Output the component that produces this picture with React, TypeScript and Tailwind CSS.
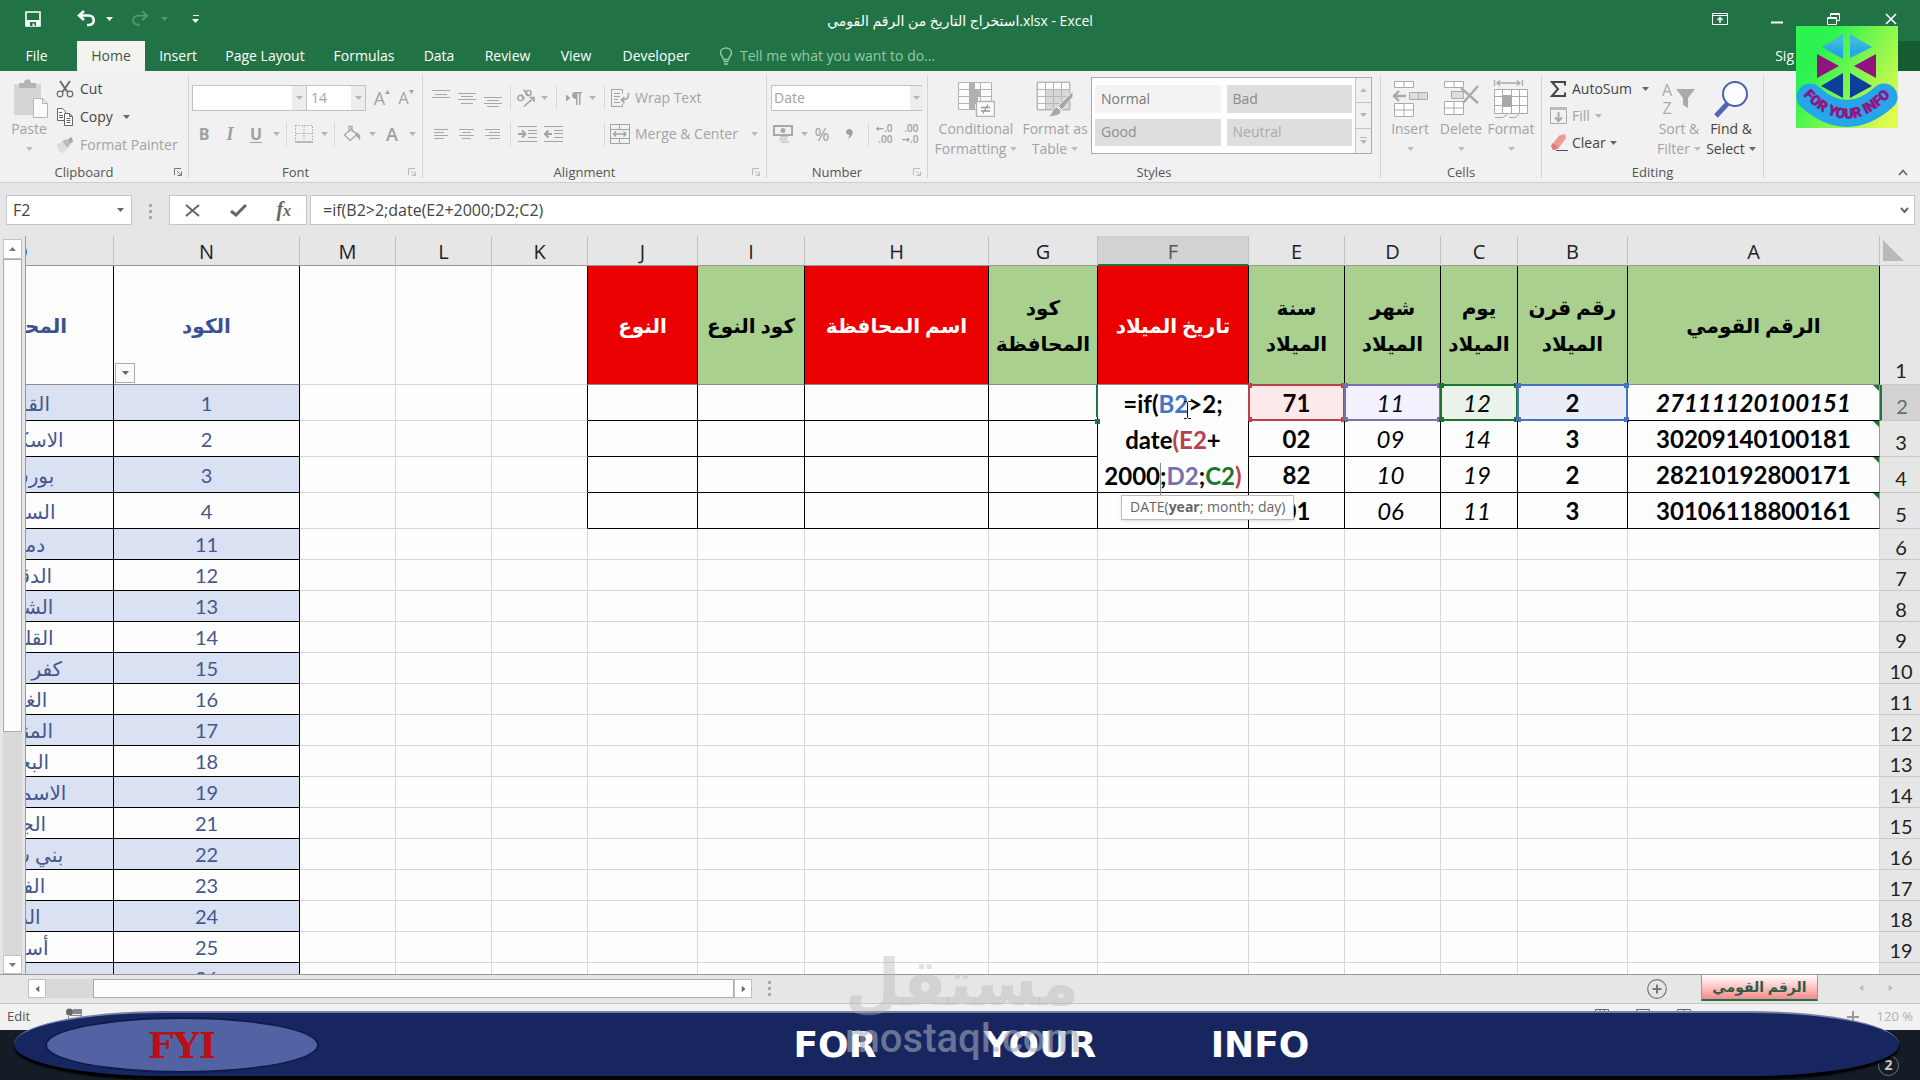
import type { ReactNode } from 'react'

const UI = "font-['Open_Sans','DejaVu_Sans',sans-serif]"
const CELL = "font-['Lato','DejaVu_Sans',sans-serif]"

const governorates: [number, string][] = [
  [1, 'القاهرة'],
  [2, 'الاسكندرية'],
  [3, 'بورسعيد'],
  [4, 'السويس'],
  [11, 'دمياط'],
  [12, 'الدقهلية'],
  [13, 'الشرقية'],
  [14, 'القليوبية'],
  [15, 'كفر الشيخ'],
  [16, 'الغربية'],
  [17, 'المنوفية'],
  [18, 'البحيرة'],
  [19, 'الاسماعيلية'],
  [21, 'الجيزة'],
  [22, 'بني سويف'],
  [23, 'الفيوم'],
  [24, 'المنيا'],
  [25, 'أسيوط'],
  [26, 'سوهاج'],
]

const people = [
  { year: '71', month: '11', day: '12', century: '2', id: '27111120100151' },
  { year: '02', month: '09', day: '14', century: '3', id: '30209140100181' },
  { year: '82', month: '10', day: '19', century: '2', id: '28210192800171' },
  { year: '01', month: '06', day: '11', century: '3', id: '30106118800161' },
]

const columns = ['O', 'N', 'M', 'L', 'K', 'J', 'I', 'H', 'G', 'F', 'E', 'D', 'C', 'B', 'A']

const tabs = [
  { name: 'File', width: 'w-[77px] pr-1' },
  { name: 'Home', width: 'w-[68px]' },
  { name: 'Insert', width: 'w-[66px]' },
  { name: 'Page Layout', width: 'w-[108px]' },
  { name: 'Formulas', width: 'w-[90px]' },
  { name: 'Data', width: 'w-[60px]' },
  { name: 'Review', width: 'w-[77px]' },
  { name: 'View', width: 'w-[60px]' },
  { name: 'Developer', width: 'w-[100px]' },
]

/* ---------- small drawing helpers ---------- */

function Caret({ className = 'text-[#b5b5b5]' }: { className?: string }) {
  return (
    <svg width="7" height="4" viewBox="0 0 7 4" className={className}>
      <path d="M0 0h7L3.5 4z" fill="currentColor" />
    </svg>
  )
}

function Slot({ w, children, label }: { w: string; children: ReactNode; label?: string }) {
  return (
    <button aria-label={label} className={`flex h-full shrink-0 items-center justify-center ${w}`}>
      {children}
    </button>
  )
}

function Sep({ w = 'w-2' }: { w?: string }) {
  return (
    <span className={`flex h-6 shrink-0 justify-center ${w}`}>
      <span className="w-px bg-[#d8d8d8]" />
    </span>
  )
}

function Lines({ rows }: { rows: [number, number, number][] }) {
  return (
    <svg width="20" height="20" viewBox="0 0 20 20" stroke="#a8a8a8" strokeWidth="1">
      {rows.map(([x1, x2, y]) => (
        <path key={y} d={`M${x1} ${y}.5H${x2}`} />
      ))}
    </svg>
  )
}

function Launcher({ color }: { color: string }) {
  return (
    <svg width="8" height="8" viewBox="0 0 8 8" className={`absolute right-[6px] bottom-[2px] ${color}`}>
      <path d="M.5 7V.5H7M3 3l4 4M7.5 3.5v4h-4" fill="none" stroke="currentColor" />
    </svg>
  )
}

function Group(props: { title: string; width: string; launcher?: string; children: ReactNode }) {
  return (
    <section className={`relative my-1 flex shrink-0 flex-col border-r border-[#d4d4d4] ${props.width}`}>
      <div className="flex h-[87px]">{props.children}</div>
      <p className={`h-4 text-center text-[13px] leading-5 text-[#555] ${props.launcher ? 'pr-5' : ''}`}>{props.title}</p>
      {props.launcher && <Launcher color={props.launcher} />}
    </section>
  )
}

function BigButton(props: { icon: ReactNode; lines: string[]; width: string; active?: boolean }) {
  const [first, second] = props.lines
  return (
    <button
      className={`flex shrink-0 flex-col items-center pt-1 text-sm leading-5 whitespace-nowrap ${props.width} ${
        props.active ? 'text-[#444]' : 'text-[#a3a3a3]'
      }`}
    >
      <span className="flex h-10 items-center justify-center">{props.icon}</span>
      <span>{first}</span>
      <span className="flex h-5 items-center gap-1">
        {second}
        <Caret className={props.active ? 'text-[#666]' : 'text-[#bbb]'} />
      </span>
    </button>
  )
}

/* ---------- title bar ---------- */

function TitleBar() {
  return (
    <header className="bg-[#217346] text-white">
      <div className="grid h-[41px] grid-cols-[1fr_auto_1fr] items-center">
        <div className="flex items-center pb-1 pl-[25px]">
          <button aria-label="Save">
            <svg width="16" height="16" viewBox="0 0 16 16">
              <path d="M1 1h14v14H1z" fill="none" stroke="#fff" strokeWidth="1.6" />
              <path d="M1 9h14v6H1z" fill="#fff" />
              <path d="M5 11h6v4H9.500v-2.500h-2V15H5z" fill="#217346" />
            </svg>
          </button>
          <button aria-label="Undo" className="ml-9 flex items-center gap-[9px]">
            <svg width="20" height="17" viewBox="0 0 20 17" fill="none" stroke="#fff" strokeWidth="2.600">
              <path d="M7 1 2 5.500l5 4.500M3 5.500h8.500c7 0 7 9.500 0 9.500H10" />
            </svg>
            <Caret className="text-white" />
          </button>
          <button aria-label="Redo" className="ml-[17px] flex items-center gap-3 opacity-25">
            <svg width="19" height="17" viewBox="0 0 20 17" fill="none" stroke="#fff" strokeWidth="2">
              <path d="m13 1 5 4.500-5 4.500M17 5.500H8.500c-7 0-7 9.500 0 9.500H10" />
            </svg>
            <Caret className="text-white" />
          </button>
          <button aria-label="Customize Quick Access Toolbar" className="ml-6 flex flex-col items-center gap-[3px]">
            <span className="h-px w-[6px] bg-white" />
            <Caret className="text-white" />
          </button>
        </div>
        <h1 dir="ltr" className="text-sm">
          <bdi>استخراج التاريخ من الرقم القومي</bdi>.xlsx - Excel
        </h1>
        <div className="flex items-center justify-end pr-[23px] pb-1">
          <button aria-label="Ribbon Display Options" className="mr-[43px]">
            <svg width="16" height="12" viewBox="0 0 16 12" fill="none" stroke="#fff">
              <path d="M.5.5h15v11H.5zM0 2.500h16" />
              <path d="M8 10V4.500M5.500 7 8 4.500 10.500 7" strokeWidth="1.500" />
            </svg>
          </button>
          <button aria-label="Minimize" className="mr-[44px]">
            <svg width="12" height="12" viewBox="0 0 12 12">
              <path d="M0 8.500h12v2H0z" fill="#fff" />
            </svg>
          </button>
          <button aria-label="Restore" className="mr-[45px]">
            <svg width="13" height="12" viewBox="0 0 13 12" fill="none" stroke="#fff">
              <path d="M.5 4.500h9v7h-9zM.5 5.500h9M3.500 4V.5h9v7h-3M3.500 1.500h9" />
            </svg>
          </button>
          <button aria-label="Close">
            <svg width="12" height="12" viewBox="0 0 12 12" stroke="#fff" strokeWidth="1.700">
              <path d="m1 1 10 10M11 1 1 11" />
            </svg>
          </button>
        </div>
      </div>

      <nav className="flex h-[30px] items-stretch text-sm">
        {tabs.map((tab) => (
          <button
            key={tab.name}
            className={`shrink-0 ${tab.width} ${tab.name === 'Home' ? 'bg-[#f3f3f1] text-[#3d5a49]' : ''}`}
          >
            {tab.name}
          </button>
        ))}
        <button className="ml-[13px] flex items-center gap-[7px] text-[#93c9a8]">
          <svg width="14" height="18" viewBox="0 0 14 18" fill="none" stroke="currentColor" strokeWidth="1.500">
            <path d="M4.500 12.500C4.500 10 1.500 9 1.500 5.800 1.500 3 4 1 7 1s5.500 2 5.500 4.800c0 3.200-3 4.200-3 6.700zM4.500 14.500h5M5 17h4" />
          </svg>
          Tell me what you want to do...
        </button>
        <button className="ml-auto pr-[102px]">Sig</button>
        <span className="w-6 bg-[#155c33]" />
      </nav>
    </header>
  )
}

/* ---------- ribbon ---------- */

function Clipboard() {
  return (
    <Group title="Clipboard" width="w-[189px]" launcher="text-[#777]">
      <BigButton
        width="ml-[2px] w-[54px]"
        lines={['Paste', '']}
        icon={
          <svg width="36" height="40" viewBox="0 0 36 40" className="ml-1">
            <path d="M1 5h27v31H1z" fill="#d6d6d6" />
            <path d="M6 4h5c0-5 7-5 7 0h5v5H6z" fill="#b4b4b4" />
            <path d="M20.500 19.500h9l5 5v14h-14zM29.500 19.500v5h5" fill="#fbfbfb" stroke="#b4b4b4" />
          </svg>
        }
      />
      <div className="flex flex-col text-sm text-[#444]">
        <button className="flex h-7 items-center gap-[6px]">
          <svg width="18" height="18" viewBox="0 0 18 18" fill="none" stroke="#6b6b6b">
            <path d="m4 1 7.500 11M14 1 6.500 12" strokeWidth="2" />
            <circle cx="4" cy="14" r="2.800" strokeWidth="1.200" />
            <circle cx="14" cy="14" r="2.800" strokeWidth="1.200" />
          </svg>
          Cut
        </button>
        <button className="flex h-7 items-center gap-[6px]">
          <svg width="18" height="18" viewBox="0 0 18 18" fill="#fff" stroke="#666">
            <path d="M1.500.5h5l3 3v9h-8zM3 4.500h3M3 7.500h4M3 9.500h4" />
            <path d="M8.500 5.500h5l3 3v9h-8zM13.500 5.500v3h3M10.500 10.500h4M10.500 12.500h4M10.500 14.500h4" />
          </svg>
          Copy
          <Caret className="ml-1 text-[#666]" />
        </button>
        <button className="flex h-7 items-center gap-[6px] text-[#a3a3a3]">
          <svg width="18" height="16" viewBox="0 0 18 16">
            <path d="m12 2 4-2 1 5-4 2z" fill="#a8a8a8" />
            <path d="m6 4 5-2 3 6-3 3z" fill="#bbb" />
            <path d="m1 7 5-2 5 7-4 4c-3 0-6-4-6-9z" fill="#dcdcdc" />
          </svg>
          Format Painter
        </button>
      </div>
    </Group>
  )
}

function FontGroup() {
  return (
    <Group title="Font" width="w-[234px]" launcher="text-[#bbb]">
      <div className="pt-[10px]">
        <div className="flex h-[26px] items-center pl-[3px]">
          <label className="relative flex">
            <select aria-label="Font name" className="h-[26px] w-[115px] appearance-none border border-[#c3c3c3] bg-white">
              <option> </option>
            </select>
            <span className="pointer-events-none absolute top-px right-px bottom-px flex w-[14px] items-center justify-center bg-[#ededed]">
              <Caret />
            </span>
          </label>
          <label className="relative -ml-px flex">
            <select aria-label="Font size" className="h-[26px] w-[60px] appearance-none border border-[#c3c3c3] bg-white pl-1 text-sm text-[#a3a3a3]">
              <option>14</option>
            </select>
            <span className="pointer-events-none absolute top-px right-px bottom-px flex w-[14px] items-center justify-center bg-[#ededed]">
              <Caret />
            </span>
          </label>
          <Slot w="ml-1 w-6">
            <span className="flex text-lg leading-6 text-[#a3a3a3]">
              A<svg width="5" height="4" viewBox="0 0 5 4" className="mt-1"><path d="M2.500 0 5 4H0z" fill="#a3a3a3" /></svg>
            </span>
          </Slot>
          <Slot w="w-6">
            <span className="flex text-base leading-6 text-[#a3a3a3]">
              A<svg width="5" height="4" viewBox="0 0 5 4" className="mt-1"><path d="M0 0h5L2.500 4z" fill="#a3a3a3" /></svg>
            </span>
          </Slot>
        </div>
        <div className="mt-[11px] flex h-6 items-center pl-px text-base text-[#a0a0a0]">
          <Slot w="w-7"><b>B</b></Slot>
          <Slot w="w-6"><b className="font-['Liberation_Serif',serif] text-lg italic">I</b></Slot>
          <Slot w="w-7"><b className="underline underline-offset-2">U</b></Slot>
          <Slot w="w-3"><Caret /></Slot>
          <Sep />
          <Slot w="w-7" label="Borders">
            <svg width="18" height="18" viewBox="0 0 18 18" fill="none" stroke="#a8a8a8">
              <path d="M.5.5h17v16M.5.5v16M9 1v16M1 8.500h16" strokeDasharray="1.500 1.500" />
              <path d="M0 17h18" strokeWidth="1.500" />
            </svg>
          </Slot>
          <Slot w="w-3"><Caret /></Slot>
          <Sep />
          <Slot w="w-7" label="Fill Color">
            <svg width="18" height="18" viewBox="0 0 18 18" fill="none" stroke="#a8a8a8" strokeWidth="1.300">
              <path d="m8 4 6 5.500-7 6L1.500 10zM6 7V1.500h3V7" />
              <path d="M14 8c3 2 3 4 2.500 6-1-1-1.500-3-3.500-4z" fill="#a8a8a8" />
            </svg>
          </Slot>
          <Slot w="w-3"><Caret /></Slot>
          <Slot w="w-7"><span className="text-lg leading-6 font-semibold">A</span></Slot>
          <Slot w="w-3"><Caret /></Slot>
        </div>
      </div>
    </Group>
  )
}

function Alignment() {
  return (
    <Group title="Alignment" width="w-[344px]" launcher="text-[#bbb]">
      <div className="pt-[10px] pl-[5px] text-sm text-[#a3a3a3]">
        <div className="flex h-[26px] items-center">
          <Slot w="w-[26px]"><Lines rows={[[1, 19, 2], [4, 16, 6], [1, 19, 9]]} /></Slot>
          <Slot w="w-[26px]"><Lines rows={[[1, 19, 5], [4, 16, 8], [1, 19, 11], [4, 16, 15]]} /></Slot>
          <Slot w="w-[26px]"><Lines rows={[[1, 19, 9], [4, 16, 12], [1, 19, 15], [4, 16, 18]]} /></Slot>
          <Sep />
          <Slot w="w-6" label="Orientation">
            <svg width="20" height="20" viewBox="0 0 20 20" fill="none" stroke="#a3a3a3" strokeWidth="1.400">
              <circle cx="4.500" cy="10" r="2.600" />
              <path d="m5 6.500 3.500 4.500M7.500 1.500l5.500 6.500" />
              <circle cx="12.500" cy="5" r="2.600" />
              <path d="M8 18.500 18 9.500M13.500 9.500H18V14" strokeWidth="1.600" />
            </svg>
          </Slot>
          <Slot w="w-3"><Caret /></Slot>
          <Sep w="w-3" />
          <Slot w="w-6" label="Text direction">
            <svg width="16" height="13" viewBox="0 0 16 13" fill="#a3a3a3">
              <path d="M0 2.500 4.500 6 0 9.500zM9 0h7v1.500h-1.500V13H13V1.500h-1.500V13H10V7C5 7 5 0 9 0z" />
            </svg>
          </Slot>
          <Slot w="w-3"><Caret /></Slot>
          <Sep w="w-3" />
          <button className="flex items-center gap-[5px]">
            <svg width="20" height="18" viewBox="0 0 20 18" fill="none" stroke="#a3a3a3">
              <path d="M1.500.5h11v4M1.500.5v17h11v-3M4 4.500h6M4 7.500h6M4 10.500h4M4 13.500h6" />
              <path d="M18 4c1.500 4-1 7-6 7M14.500 8 11.500 11l3 3" strokeWidth="1.600" />
            </svg>
            Wrap Text
          </button>
        </div>
        <div className="mt-[11px] flex h-6 items-center">
          <Slot w="w-[26px]"><Lines rows={[[3, 17, 5], [3, 13, 8], [3, 17, 11], [3, 13, 14]]} /></Slot>
          <Slot w="w-[26px]"><Lines rows={[[2, 17, 5], [5, 14, 8], [2, 17, 11], [5, 14, 14]]} /></Slot>
          <Slot w="w-[26px]"><Lines rows={[[2, 17, 5], [6, 17, 8], [2, 17, 11], [6, 17, 14]]} /></Slot>
          <Sep />
          <Slot w="w-[26px]" label="Decrease Indent">
            <svg width="19" height="16" viewBox="0 0 19 16" fill="none" stroke="#a3a3a3">
              <path d="M0 .5h19M10 4.500h9M10 7.500h9M10 11.500h9M0 15.500h19" />
              <path d="M0 8h7M4 4.500 7.500 8 4 11.500" strokeWidth="2" />
            </svg>
          </Slot>
          <Slot w="w-[26px]" label="Increase Indent">
            <svg width="19" height="16" viewBox="0 0 19 16" fill="none" stroke="#a3a3a3">
              <path d="M0 .5h19M10 4.500h9M10 7.500h9M10 11.500h9M0 15.500h19" />
              <path d="M1 8h7M4.500 4.500 1 8l3.500 3.500" strokeWidth="2" />
            </svg>
          </Slot>
          <span className="w-8" />
          <Sep w="w-3" />
          <button className="flex items-center gap-[5px]">
            <svg width="20" height="20" viewBox="0 0 20 20" fill="none" stroke="#a3a3a3">
              <path d="M.5.5h19v19H.5zM.5 5.500h19M.5 14.500h19M9.500.5v5M9.500 14.500v5" />
              <path d="M3.500 10h12M6 7.500 3.500 10 6 12.500M13.500 7.500 16 10l-2.500 2.500" strokeWidth="1.300" />
            </svg>
            Merge &amp; Center
            <Caret className="ml-2 text-[#bbb]" />
          </button>
        </div>
      </div>
    </Group>
  )
}

function NumberGroup() {
  return (
    <Group title="Number" width="w-[161px]" launcher="text-[#bbb]">
      <div className="pt-[10px] text-[#a0a0a0]">
        <label className="relative ml-1 flex">
          <select aria-label="Number format" className="h-[26px] w-[151px] appearance-none border border-[#c3c3c3] bg-white pl-[2px] text-sm">
            <option>Date</option>
          </select>
          <span className="pointer-events-none absolute top-px right-px bottom-px flex w-[13px] items-center justify-center bg-[#ededed]">
            <Caret />
          </span>
        </label>
        <div className="mt-[11px] flex h-6 items-center pl-px">
          <Slot w="w-[30px]" label="Accounting format">
            <svg width="20" height="19" viewBox="0 0 20 19">
              <path d="M1 1h18v9H1z" fill="none" stroke="#a8a8a8" strokeWidth="2" />
              <circle cx="10" cy="5.500" r="2.500" fill="#a8a8a8" />
              <path d="M7 12h8M6 14.500h8M8 17h8" stroke="#c4c4c4" strokeWidth="1.500" />
            </svg>
          </Slot>
          <Slot w="w-3"><Caret /></Slot>
          <Slot w="w-6"><span className="text-lg leading-6">%</span></Slot>
          <Slot w="w-[30px]" label="Comma style">
            <svg width="7" height="10" viewBox="0 0 7 10" fill="#a0a0a0">
              <path d="M3 0c3 0 4 2 3.500 4.500S4 9 1 10c1.500-1.500 2.500-2.500 2.500-4C-1 6-1 0 3 0z" />
            </svg>
          </Slot>
          <Sep />
          <Slot w="w-6">
            <span className="flex flex-col items-end text-[10px] leading-[11px] font-semibold">
              <span>←.0</span>
              <span>.00</span>
            </span>
          </Slot>
          <Slot w="w-7">
            <span className="flex flex-col items-end text-[10px] leading-[11px] font-semibold">
              <span>.00</span>
              <span>→.0</span>
            </span>
          </Slot>
        </div>
      </div>
    </Group>
  )
}

function Styles() {
  return (
    <Group title="Styles" width="w-[453px]">
      <BigButton
        width="ml-[2px] w-[92px]"
        lines={['Conditional', 'Formatting']}
        icon={
          <svg width="38" height="36" viewBox="0 0 38 36" fill="none" stroke="#b4b4b4">
            <path d="M1.500 1.500h33v27h-33zM1.500 8.500h33M1.500 15.500h33M1.500 22.500h33M12.500 1.500v27M23.500 1.500v27" fill="#fbfbfb" />
            <path d="M12 2h6v6h-6zM12 9h11v6H12zM12 16h9v6h-9zM12 23h6v6h-6z" fill="#b0b0b0" stroke="none" />
            <path d="M19.500 20.500h18v15h-18z" fill="#fbfbfb" strokeWidth="1.500" />
            <path d="M24 26.500h9M24 30h9M31 23.500l-5 9" stroke="#999" strokeWidth="1.300" />
          </svg>
        }
      />
      <BigButton
        width="w-[66px]"
        lines={['Format as', 'Table']}
        icon={
          <svg width="38" height="36" viewBox="0 0 38 36" fill="none" stroke="#b8b8b8">
            <path d="M1 1h33v28H1z" fill="#fbfbfb" />
            <path d="M9 8h25v21H9z" fill="#d8d8d8" stroke="none" />
            <path d="M1.500 1.500h32v27h-32zM1.500 8.500h32M1.500 15.500h32M1.500 22.500h32M9.500 1.500v27M17.500 1.500v27M25.500 1.500v27" />
            <path d="M37 10v6L26 29l-4-4zM21 26l4 4c0 4-4 5-13 6 4-2 4-9 9-10z" fill="#a8a8a8" stroke="#f3f3f3" />
          </svg>
        }
      />
      <div className="mt-[2px] ml-[3px] flex h-[77px] w-[281px] border border-[#ababab] bg-white text-sm">
        <div className="grid flex-1 grid-cols-2 gap-x-[6px] gap-y-[6px] px-[3px] py-[7px] text-left text-[#a3a3a3]">
          <button className="bg-[#f5f2f3] pl-[6px] text-left text-[#777]">Normal</button>
          <button className="bg-[#dedede] pl-[6px] text-left text-[#8a8a8a]">Bad</button>
          <button className="bg-[#dedede] pl-[6px] text-left text-[#8f8f8f]">Good</button>
          <button className="bg-[#dedede] pl-[6px] text-left text-[#aaa]">Neutral</button>
        </div>
        <div className="flex w-4 flex-col divide-y divide-[#c4c4c4] border-l border-[#c4c4c4] bg-[#f0f0f0]">
          <button aria-label="Previous styles" className="flex flex-1 items-center justify-center"><Caret className="rotate-180 text-[#bbb]" /></button>
          <button aria-label="Next styles" className="flex flex-1 items-center justify-center"><Caret /></button>
          <button aria-label="More styles" className="flex flex-1 flex-col items-center justify-center gap-[2px]">
            <span className="h-px w-[7px] bg-[#bbb]" />
            <Caret />
          </button>
        </div>
      </div>
    </Group>
  )
}

function Cells() {
  return (
    <Group title="Cells" width="w-[161px]">
      <BigButton
        width="ml-[3px] w-[52px]"
        lines={['Insert', '']}
        icon={
          <svg width="36" height="36" viewBox="0 0 36 36" fill="#fff" stroke="#aaa">
            <path d="M2.500.5h19v6h-19zM12 .5v6M2.500 22.500h19v13h-19zM12 22.500v13M2.500 29h19" />
            <path d="M17.500 11.500h18v7h-18zM26.500 11.500v7" fill="#ddd" />
            <path d="M14 15H2M7 10l-5 5 5 5" fill="none" strokeWidth="2.400" />
          </svg>
        }
      />
      <BigButton
        width="w-[50px]"
        lines={['Delete', '']}
        icon={
          <svg width="36" height="36" viewBox="0 0 36 36" fill="#fff" stroke="#aaa">
            <path d="M1.500.5h19v6h-19zM11 .5v6M1.500 20.500h19v13h-19zM11 20.500v13M1.500 27h19" />
            <path d="M8.500 10.500h12v7h-12z" fill="#ddd" />
            <path d="m18 7 17 15M35 5 20 22" fill="none" strokeWidth="2.400" />
          </svg>
        }
      />
      <BigButton
        width="w-[50px]"
        lines={['Format', '']}
        icon={
          <svg width="36" height="38" viewBox="0 0 36 38" fill="#fff" stroke="#aaa">
            <path d="M1.500 0v6M29.500 0v6M4 3h23M7 .5 4 3l3 2.500M24 .5 27 3l-3 2.500" fill="none" strokeWidth="1.300" />
            <path d="M1.500 9.500h33v24h-33zM1.500 16.500h33M1.500 25.500h33M9.500 9.500v24M18.500 9.500v24M26.500 9.500v24" />
            <path d="M10 15h9v12h-9z" fill="#a8a8a8" stroke="none" />
            <path d="M2 37.500h8l4-3M16 37.500h6l4-3" fill="none" />
          </svg>
        }
      />
    </Group>
  )
}

function Editing() {
  return (
    <Group title="Editing" width="w-[222px]">
      <div className="flex w-[111px] flex-col pl-2 text-sm text-[#444]">
        <button className="flex h-[27px] items-center gap-[6px]">
          <svg width="16" height="16" viewBox="0 0 16 16">
            <path d="M15 4.500V1H2l6 7-6 7h13v-3.500" fill="none" stroke="#444" strokeWidth="2" />
          </svg>
          AutoSum
          <Caret className="ml-1 text-[#666]" />
        </button>
        <button className="flex h-[27px] items-center gap-[5px] text-[#a3a3a3]">
          <svg width="17" height="17" viewBox="0 0 17 17" fill="none" stroke="#aaa">
            <path d="M.5.5h16v16H.5z" />
            <path d="M0 0h17v3H0z" fill="#bbb" stroke="none" />
            <path d="M8.500 5v9M5 10.500 8.500 14l3.500-3.500" strokeWidth="2" />
          </svg>
          Fill
          <Caret />
        </button>
        <button className="flex h-[27px] items-center gap-1">
          <svg width="18" height="17" viewBox="0 0 18 17">
            <path d="M9 1.500 15 0l1 4-8 11-5 1-2-4z" fill="#ee9a98" />
            <path d="m1 12 2-3 5 4-1 2-4 1z" fill="#d98080" />
            <path d="M6 16.500h12" stroke="#555" />
          </svg>
          Clear
          <Caret className="text-[#666]" />
        </button>
      </div>
      <BigButton
        width="w-[52px]"
        lines={['Sort &', 'Filter']}
        icon={
          <span className="flex items-center text-base leading-[18px] text-[#aaa]">
            <span className="flex flex-col items-center">
              <span>A</span>
              <span>Z</span>
            </span>
            <svg width="20" height="20" viewBox="0 0 20 20" className="ml-1">
              <path d="M0 0h19l-7 9v10l-5-3V9z" fill="#aaa" />
            </svg>
          </span>
        }
      />
      <BigButton
        width="w-[52px]"
        active
        lines={['Find &', 'Select']}
        icon={
          <svg width="36" height="38" viewBox="0 0 36 38" fill="none">
            <path d="m15 23-12 13" stroke="#4f68b0" strokeWidth="5" />
            <circle cx="22" cy="14" r="12" fill="#fdfdff" stroke="#4a63ad" strokeWidth="2" />
          </svg>
        }
      />
    </Group>
  )
}

function Ribbon() {
  return (
    <div className="flex h-28 border-b border-[#cfcfcf] bg-[#f1f1f1]">
      <Clipboard />
      <FontGroup />
      <Alignment />
      <NumberGroup />
      <Styles />
      <Cells />
      <Editing />
      <button aria-label="Collapse the Ribbon" className="mt-auto mr-3 mb-[6px] ml-auto">
        <svg width="10" height="7" viewBox="0 0 10 7">
          <path d="m1 6 4-4.500L9 6" fill="none" stroke="#666" strokeWidth="1.700" />
        </svg>
      </button>
    </div>
  )
}

function FormulaBar() {
  return (
    <div className="flex h-[53px] items-start bg-[#e6e6e6] pt-3 pr-[5px] pl-[6px] text-[#444]">
      <label className="relative flex">
        <input aria-label="Name Box" defaultValue="F2" className="h-[30px] w-[126px] border border-[#c6c6c6] bg-white pl-[6px] text-base" />
        <Caret className="absolute top-[13px] right-2 text-[#666]" />
      </label>
      <Grip className="mx-[17px] mt-[9px]" />
      <div className="flex h-[30px] w-[138px] items-center justify-around border border-[#c6c6c6] bg-white">
        <button aria-label="Cancel">
          <svg width="15" height="13" viewBox="0 0 15 13" stroke="#666" strokeWidth="2">
            <path d="m1 1 13 11M14 1 1 12" />
          </svg>
        </button>
        <button aria-label="Enter">
          <svg width="17" height="13" viewBox="0 0 17 13" fill="none" stroke="#666" strokeWidth="3">
            <path d="m1 7 5 4L16 1" />
          </svg>
        </button>
        <button aria-label="Insert Function" className="font-['Liberation_Serif',serif] text-xl leading-6 font-bold text-[#666] italic">
          f<span className="text-base">x</span>
        </button>
      </div>
      <label className="relative ml-[3px] flex flex-1">
        <input
          aria-label="Formula"
          defaultValue="=if(B2>2;date(E2+2000;D2;C2)"
          className="h-[30px] w-full border border-[#c6c6c6] bg-white pl-3 text-base"
        />
        <svg width="9" height="6" viewBox="0 0 9 6" className="absolute top-3 right-[6px]">
          <path d="m1 1 3.500 4L8 1" fill="none" stroke="#666" strokeWidth="2" />
        </svg>
      </label>
    </div>
  )
}

function Grip({ className }: { className: string }) {
  return (
    <span className={`flex flex-col gap-[3px] ${className}`}>
      <span className="size-[3px] bg-[#ababab]" />
      <span className="size-[3px] bg-[#ababab]" />
      <span className="size-[3px] bg-[#ababab]" />
    </span>
  )
}

/* ---------- sheet ---------- */

function RangeBox({ line, fill, handle }: { line: string; fill: string; handle: string }) {
  return (
    <span className={`pointer-events-none absolute -inset-px border-2 ${line} ${fill}`}>
      <span className={`absolute -top-[3px] -left-[3px] size-[5px] ${handle}`} />
      <span className={`absolute -top-[3px] -right-[3px] size-[5px] ${handle}`} />
      <span className={`absolute -bottom-[3px] -left-[3px] size-[5px] ${handle}`} />
      <span className={`absolute -right-[3px] -bottom-[3px] size-[5px] ${handle}`} />
    </span>
  )
}

function CellEditor() {
  return (
    <div className="absolute top-0 left-0 z-20 w-full bg-[#fdfdfd] pt-px text-center text-2xl leading-9 font-bold whitespace-nowrap text-black">
      <span className="absolute top-0 -left-[2px] h-8 w-[2px] bg-[#217346]" />
      <span className="absolute top-[34px] -left-[3px] size-[5px] bg-[#217346]" />
      <p>=if(<span className="text-[#4472c4]">B2</span>&gt;2;</p>
      <p>date<span className="text-[#b8414b]">(E2</span>+</p>
      <p className="h-[34px]">
        2000<span className="-mr-px inline-block h-8 w-px bg-[#888] align-middle" />;
        <span className="text-[#7a6fae]">D2</span>;<span className="text-[#19762b]">C2</span>
        <span className="text-[#b8414b]">)</span>
      </p>
      <svg width="9" height="18" viewBox="0 0 9 18" className="absolute top-4 left-[85px]">
        <path d="M1 .5h2.500l1 1 1-1H8M4.500 1.500v15M1 17.500h2.500l1-1 1 1H8" fill="none" stroke="#111" />
      </svg>
      <div className={`absolute top-[110px] left-[23px] h-[25px] border border-[#bdbdbd] bg-white px-2 text-sm leading-[21px] font-normal text-[#666] shadow ${UI}`}>
        DATE(<b>year</b>; month; day)
      </div>
    </div>
  )
}

const th = 'border-r border-b border-r-black border-b-[#8c8c8c] p-0 text-xl leading-9 font-bold'
const green = 'bg-[#a9d08e] text-black'
const red = 'bg-[#eb0000] text-white'
const black = 'border-r border-b border-black p-0'
const faint = 'border-r border-b border-[#d6d6d6] p-0'

function HeaderRow() {
  return (
    <tr className="h-[119px]">
      <td className={`overflow-hidden text-[#3b5192] ${th}`}>
        <div className="flex justify-end">
          <span className="w-[186px] shrink-0 text-center">المحافظة</span>
        </div>
      </td>
      <td className={`relative text-center text-[#3b5192] ${th}`}>
        الكود
        <button aria-label="Filter" className="absolute bottom-px left-px flex size-5 items-center justify-center border border-[#ababab] bg-[#fafafa]">
          <Caret className="text-[#666]" />
        </button>
      </td>
      <td className={faint} />
      <td className={faint} />
      <td className="border-r border-b border-r-black border-b-[#d6d6d6]" />
      <td className={`${th} ${red} text-center`}>النوع</td>
      <td className={`${th} ${green} text-center`}>كود النوع</td>
      <td className={`${th} ${red} text-center`}>اسم المحافظة</td>
      <td className={`${th} ${green} text-center`}>كود<br />المحافظة</td>
      <td className={`${th} ${red} text-center`}>تاريخ الميلاد</td>
      <td className={`${th} ${green} text-center`}>سنة<br />الميلاد</td>
      <td className={`${th} ${green} text-center`}>شهر<br />الميلاد</td>
      <td className={`${th} ${green} text-center`}>يوم<br />الميلاد</td>
      <td className={`${th} ${green} text-center`}>رقم قرن<br />الميلاد</td>
      <td className={`${th} ${green} text-center`}>الرقم القومي</td>
      <RowNumber n={1} />
    </tr>
  )
}

function RowNumber({ n }: { n: number }) {
  return (
    <th
      className={`border-b border-b-[#c8c8c8] p-0 pl-[2px] align-bottom text-xl font-normal ${
        n < 6 ? 'leading-7' : 'leading-6'
      } ${n === 2 ? 'border-l-2 border-l-[#217346] bg-[#d2d2d2] text-[#5f6f66]' : 'bg-[#e6e6e6] text-[#222]'}`}
    >
      {n}
    </th>
  )
}

function DataRow({ index }: { index: number }) {
  const [code, name] = governorates[index]
  const person = people[index]
  const shade = index % 2 === 0 ? 'bg-[#d9e1f2]' : 'bg-[#fdfdfd]'
  const first = index === 0
  const edge = person ? 'border-r-black' : 'border-r-[#d6d6d6]'
  return (
    <tr className={person ? 'h-9' : 'h-[31px]'}>
      <td className={`overflow-hidden text-xl leading-7 text-[#46578f] ${black} ${shade}`}>
        <div className="flex justify-end">
          <span className="w-[186px] shrink-0 text-center">{name}</span>
        </div>
      </td>
      <td className={`text-center text-xl leading-7 text-[#46578f] ${black} ${shade}`}>{code}</td>
      <td className={faint} />
      <td className={faint} />
      <td className={`border-r border-b border-b-[#d6d6d6] ${edge}`} />
      {person ? (
        <>
          <td className={black} />
          <td className={black} />
          <td className={black} />
          <td className={black} />
          <td className={`relative ${black}`}>{first && <CellEditor />}</td>
          <td className={`relative text-center font-bold ${black}`}>
            {person.year}
            {first && <RangeBox line="border-[#b8414b]" fill="bg-[#ff0000]/8" handle="bg-[#b8414b]" />}
          </td>
          <td className={`relative pr-1 text-center italic ${black}`}>
            {person.month}
            {first && <RangeBox line="border-[#7a6fae]" fill="bg-[#7a60ff]/8" handle="bg-[#7a6fae]" />}
          </td>
          <td className={`relative pr-1 text-center italic ${black}`}>
            {person.day}
            {first && <RangeBox line="border-[#19762b]" fill="bg-[#19762b]/8" handle="bg-[#19762b]" />}
          </td>
          <td className={`relative text-center font-bold ${black}`}>
            {person.century}
            {first && <RangeBox line="border-[#4472c4]" fill="bg-[#4460c4]/10" handle="bg-[#4472c4]" />}
          </td>
          <td className={`relative text-center font-bold ${black} border-r-[#999] ${first ? 'italic' : ''}`}>
            {person.id}
            <svg width="6" height="6" viewBox="0 0 6 6" className="absolute top-0 right-0">
              <path d="M0 0h6v6z" fill="#19762b" />
            </svg>
          </td>
        </>
      ) : (
        columns.slice(5).map((c) => <td key={c} className={faint} />)
      )}
      <RowNumber n={index + 2} />
    </tr>
  )
}

function Sheet() {
  return (
    <div className="flex min-h-0 flex-1 overflow-hidden border-b border-[#999] bg-[#e6e6e6]">
      <div className="flex w-[25px] shrink-0 flex-col pt-[3px] pr-[3px] pl-[3px]">
        <button aria-label="Scroll up" className="flex h-5 items-center justify-center border border-[#c0c0c0] bg-white">
          <Caret className="rotate-180 text-[#777]" />
        </button>
        <div className="flex-1 bg-[#d9d9d9]">
          <div className="h-[68%] border border-[#ababab] bg-[#fdfdfd]" />
        </div>
        <button aria-label="Scroll down" className="flex h-[19px] items-center justify-center border border-[#c0c0c0] bg-white">
          <Caret className="text-[#777]" />
        </button>
      </div>
      <div className="min-w-0 flex-1 border-l border-[#999]">
        <table className={`w-full table-fixed border-separate border-spacing-0 bg-[#fdfdfd] text-2xl leading-8 ${CELL}`}>
          <colgroup>
            <col className="w-[88px]" />
            <col className="w-[186px]" />
            <col className="w-[96px]" />
            <col className="w-[96px]" />
            <col className="w-[96px]" />
            <col className="w-[110px]" />
            <col className="w-[107px]" />
            <col className="w-[184px]" />
            <col className="w-[109px]" />
            <col className="w-[151px]" />
            <col className="w-[96px]" />
            <col className="w-[96px]" />
            <col className="w-[77px]" />
            <col className="w-[110px]" />
            <col />
            <col className="w-[40px]" />
          </colgroup>
          <thead>
            <tr className={`h-[30px] text-xl leading-6 ${UI}`}>
              {columns.map((c) => (
                <th
                  key={c}
                  className={`overflow-hidden border-r border-b border-r-[#c0c0c0] p-0 pt-[3px] font-normal ${
                    c === 'F' ? 'border-b-2 border-b-[#217346] bg-[#d2d2d2] text-[#555]' : 'border-b-[#999] bg-[#e6e6e6] text-[#222]'
                  }`}
                >
                  {c === 'O' ? (
                    <div className="flex justify-end">
                      <span className="w-[186px] shrink-0">O</span>
                    </div>
                  ) : (
                    c
                  )}
                </th>
              ))}
              <th className="border-b border-[#c8c8c8] bg-[#e6e6e6] p-0">
                <svg width="21" height="21" viewBox="0 0 21 21" className="ml-[3px]">
                  <path d="M0 0v21h21z" fill="#b8b8b8" />
                </svg>
              </th>
            </tr>
          </thead>
          <tbody>
            <HeaderRow />
            {governorates.map((g, i) => (
              <DataRow key={g[0]} index={i} />
            ))}
          </tbody>
        </table>
      </div>
    </div>
  )
}

/* ---------- footer ---------- */

function SheetBar() {
  return (
    <div className="flex h-7 shrink-0 items-start bg-[#e6e6e6] pl-7">
      <button aria-label="Scroll left" className="mt-1 flex h-[19px] w-[18px] items-center justify-center border border-[#c0c0c0] bg-white">
        <Caret className="rotate-90 text-[#666]" />
      </button>
      <div className="mt-1 h-[19px] w-[688px] bg-[#d9d9d9] pl-[47px]">
        <div className="h-full border border-[#ababab] bg-[#fdfdfd]" />
      </div>
      <button aria-label="Scroll right" className="mt-1 flex h-[19px] w-[18px] items-center justify-center border border-[#c0c0c0] bg-white">
        <Caret className="-rotate-90 text-[#666]" />
      </button>
      <Grip className="mt-[6px] ml-4" />
      <button aria-label="New sheet" className="mt-1 ml-auto">
        <svg width="20" height="20" viewBox="0 0 20 20" fill="none" stroke="#777">
          <circle cx="10" cy="10" r="9.300" strokeWidth="1.200" />
          <path d="M5.500 10h9M10 5.500v9" strokeWidth="2" />
        </svg>
      </button>
      <button className="ml-[34px] h-[26px] w-[117px] border-x border-b-2 border-x-[#999] border-b-[#217346] bg-gradient-to-b from-white to-[#f28b8b] text-sm leading-5 font-bold text-[#2f5b45]">
        الرقم القومي
      </button>
      <div className="mt-[11px] mr-[26px] ml-10 flex gap-[22px]">
        <Caret className="rotate-90 text-[#b8b8b8]" />
        <Caret className="-rotate-90 text-[#b8b8b8]" />
      </div>
    </div>
  )
}

function StatusBar() {
  return (
    <div className="flex h-[27px] shrink-0 items-center border-t border-[#c6c6c6] bg-[#f1f1f1] px-[7px] text-[13px] text-[#555]">
      Edit
      <svg width="16" height="14" viewBox="0 0 16 14" className="mb-1 ml-9">
        <path d="M5.500 2.500h10v11h-13V8M4 7.500h11M4 10.500h11" fill="none" stroke="#888" />
        <path d="M7 1h9v5H7z" fill="#888" />
        <circle cx="3.500" cy="4" r="3.500" fill="#666" />
      </svg>
      <svg width="98" height="14" viewBox="0 0 98 14" className="mr-[154px] mb-1 ml-auto" fill="none" stroke="#666">
        <path d="M.5 1.500h13v12H.5zM5 1.500v12M9.500 1.500v12M41.500 1.500h13v12h-13zM44 4.500h8M82.500 1.500h13v12h-13zM89 1.500v12" />
      </svg>
      <svg width="12" height="12" viewBox="0 0 12 12" stroke="#999" strokeWidth="2" className="mr-[18px]">
        <path d="M0 6h12M6 0v12" />
      </svg>
      <span className="text-[#b0b0b0]">120 %</span>
    </div>
  )
}

function Banner() {
  return (
    <div className="absolute right-[21px] bottom-[2px] left-[14px] h-[67px] rounded-[150px/33px] border-t-2 border-b-2 border-t-[#7681a6] border-b-black bg-[#17265f] shadow-[0_2px_2px_#000]">
      <div className="absolute top-1 left-[31px] flex h-[56px] w-[274px] items-center justify-center rounded-[50%] border-2 border-[#0f1a4c] bg-[#5163a2] font-['DejaVu_Serif',serif] text-4xl leading-none font-bold text-[#bb0f14]">
        FYI
      </div>
      <p className="absolute inset-y-0 left-[745px] flex w-[592px] items-center justify-between font-['DejaVu_Sans',sans-serif] text-4xl leading-none font-bold text-white">
        <span className="w-[152px] text-center">FOR</span>
        <span className="w-[216px] text-center">YOUR</span>
        <span className="w-[182px] text-center">INFO</span>
      </p>
    </div>
  )
}

function Watermark() {
  return (
    <div className="pointer-events-none absolute bottom-[20px] left-[845px] w-[230px] text-center font-['Roboto','DejaVu_Sans',sans-serif] font-medium whitespace-nowrap">
      <p className="h-[66px] text-[64px] leading-[64px] font-bold text-[#b4b4b4]/40">مستقل</p>
      <p className="text-[40px] leading-[42px] text-[#a4a8bc]/60">mostaql.com</p>
    </div>
  )
}

function Logo() {
  return (
    <svg width="102" height="102" viewBox="0 0 102 102" className="absolute top-[26px] right-[22px]">
      <defs>
        <linearGradient id="lime" x1="0" y1="0.200" x2="1" y2="0.800">
          <stop offset="0.200" stopColor="#2cf34f" />
          <stop offset="1" stopColor="#e2fb4c" />
        </linearGradient>
        <linearGradient id="sky" x1="0" y1="0" x2="0" y2="1">
          <stop offset="0.300" stopColor="#3fbad8" />
          <stop offset="0.700" stopColor="#25a5ea" />
        </linearGradient>
        <path id="ribbon-curve" d="M9 71Q51 114 93 71" />
      </defs>
      <path d="M0 0h102v102H0z" fill="url(#lime)" />
      <path d="M26 21 47 8v25zM54 8l22 13-22 11z" fill="url(#sky)" />
      <path d="M21 28v24l22-12zM80 28v24L58 40z" fill="#92137e" />
      <path d="M25 60 47 47v25zM54 47l22 13-22 12z" fill="#0c3f9c" />
      <path d="M14 71Q51 104 88 71" fill="none" stroke="#25a5ea" strokeWidth="27" strokeLinecap="round" />
      <text fontFamily="Roboto" fontSize="14" fontWeight="900" fill="#92137e" stroke="#92137e" strokeWidth="0.500">
        <textPath href="#ribbon-curve" startOffset="50%" textAnchor="middle">FOR YOUR INFO</textPath>
      </text>
    </svg>
  )
}

export default function App() {
  return (
    <div className={`relative flex h-screen flex-col overflow-hidden bg-[#e6e6e6] ${UI}`}>
      <TitleBar />
      <Ribbon />
      <FormulaBar />
      <Sheet />
      <footer className="relative shrink-0">
        <SheetBar />
        <StatusBar />
        <div className="flex h-[50px] items-center justify-end bg-[#141c26] pr-[21px]">
          <span className="mt-5 flex size-[21px] items-center justify-center rounded-full border border-[#777] text-sm font-bold text-[#ccc]">2</span>
        </div>
        <Banner />
        <Watermark />
      </footer>
      <Logo />
    </div>
  )
}
